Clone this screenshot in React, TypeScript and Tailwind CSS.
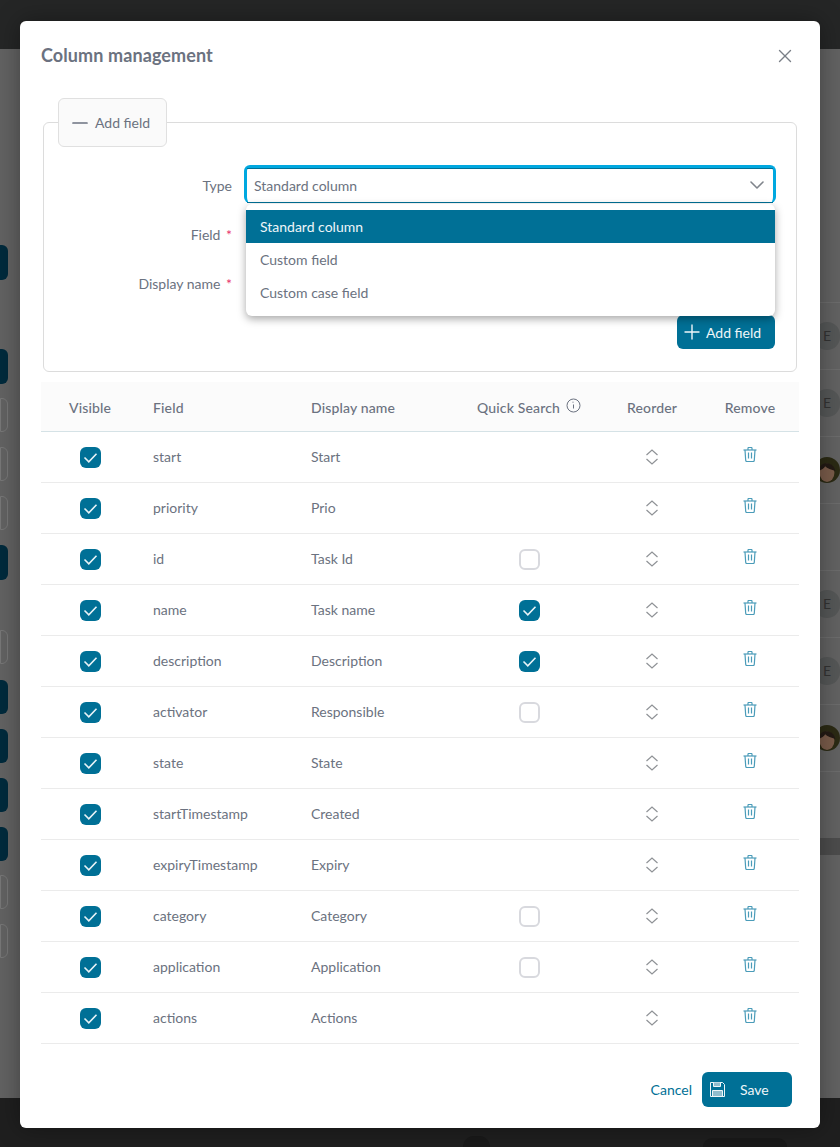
import { Minus, Plus, X, ChevronDown } from "lucide-react";

const rows = [
  { field: "start", name: "Start", quick: null },
  { field: "priority", name: "Prio", quick: null },
  { field: "id", name: "Task Id", quick: false },
  { field: "name", name: "Task name", quick: true },
  { field: "description", name: "Description", quick: true },
  { field: "activator", name: "Responsible", quick: false },
  { field: "state", name: "State", quick: null },
  { field: "startTimestamp", name: "Created", quick: null },
  { field: "expiryTimestamp", name: "Expiry", quick: null },
  { field: "category", name: "Category", quick: false },
  { field: "application", name: "Application", quick: false },
  { field: "actions", name: "Actions", quick: null },
];

const grid = "grid grid-cols-[98px_158px_163px_138px_108px_88px] items-center";

const Checkbox = ({ checked }: { checked: boolean }) =>
  checked ? (
    <div className="w-[21px] h-[21px] rounded-[6px] bg-[#007096] flex items-center justify-center">
      <svg width="21" height="21" viewBox="0 0 21 21" fill="none" stroke="#e8f3f7" strokeWidth="1.6">
        <path d="M4.5 10.5 8.8 14.8 16.5 6.8" />
      </svg>
    </div>
  ) : (
    <div className="w-[21px] h-[21px] rounded-[6px] bg-white border-2 border-[#d8d9de]" />
  );

const Reorder = () => (
  <svg width="14" height="16" viewBox="0 0 14 16" fill="none" stroke="#8f9296" strokeWidth="1.2">
    <path d="M1.5 6 7 1l5.5 5" />
    <path d="M1.5 10 7 15l5.5-5" />
  </svg>
);

const Trash = () => (
  <svg width="14" height="15" viewBox="0 0 14 15" fill="none" stroke="#4b9cb9" strokeWidth="1.2">
    <path d="M.5 3h13" />
    <path d="M5 3V1.2c0-.4.3-.7.7-.7h2.6c.4 0 .7.3.7.7V3" />
    <path d="M2 3l.7 10.2c0 .7.6 1.3 1.3 1.3h6c.7 0 1.3-.6 1.3-1.3L12 3" />
    <path d="M5.5 5.5v6M8.5 5.5v6" />
  </svg>
);

const Info = () => (
  <svg width="15" height="15" viewBox="0 0 15 15" fill="none" stroke="#6b7280" strokeWidth="1">
    <circle cx="7.5" cy="7.5" r="6.5" />
    <path d="M6.5 4.2h1M7.5 6.5v4" />
  </svg>
);

const SaveIcon = () => (
  <svg width="15" height="15" viewBox="0 0 15 15" fill="none" stroke="#eef6f9" strokeWidth="1">
    <path d="M.5.5h12l2 2v12H.5z" />
    <path d="M3.5.5v4h7v-4" fill="#8fbccd" />
    <path d="M2.5 8.5h10v6h-10z" fill="#8fbccd" />
  </svg>
);

const RowAvatar = ({ letter }: { letter?: boolean }) =>
  letter ? (
    <div className="w-7 h-7 rounded-full bg-[#555757] flex items-center justify-center text-[#333] text-sm">E</div>
  ) : (
    <svg width="28" height="28" viewBox="0 0 28 28">
      <circle cx="14" cy="14" r="14" fill="#2b2a14" />
      <ellipse cx="14" cy="17" rx="8" ry="10" fill="#7a5c4a" />
      <path d="M5 15c1-7 6-9 11-8 4 1 6 4 7 8-4-1-9-3-11-5-1 2-4 4-7 5z" fill="#231a14" />
    </svg>
  );

export default function App() {
  return (
    <div className="relative w-[840px] h-[1147px] overflow-hidden font-['Lato',sans-serif] text-[14px] text-[#6b7280]">
      {/* dimmed page behind the dialog */}
      <div className="h-full flex flex-col bg-[#1f2020]">
        <div className="h-[49px] bg-[#252626]" />
        <div className="flex-1 flex justify-between bg-[#626262]">
          <div className="w-2 flex flex-col">
            <div className="mt-[196px] h-[35px] rounded-r-md bg-[#002a3c]" />
            <div className="mt-[69px] h-[35px] rounded-r-md bg-[#002a3c]" />
            <div className="mt-[14px] h-[34px] rounded-r-md border border-[#777]" />
            <div className="mt-[15px] h-[34px] rounded-r-md border border-[#777]" />
            <div className="mt-[15px] h-[34px] rounded-r-md border border-[#777]" />
            <div className="mt-[15px] h-[35px] rounded-r-md bg-[#002a3c]" />
            <div className="mt-[50px] h-[34px] rounded-r-md border border-[#777]" />
            <div className="mt-4 h-[34px] rounded-r-md bg-[#002a3c]" />
            <div className="mt-[15px] h-[34px] rounded-r-md bg-[#002a3c]" />
            <div className="mt-[15px] h-[34px] rounded-r-md bg-[#002a3c]" />
            <div className="mt-[15px] h-[34px] rounded-r-md bg-[#002a3c]" />
            <div className="mt-[14px] h-[34px] rounded-r-md border border-[#777]" />
            <div className="mt-[15px] h-[34px] rounded-r-md border border-[#777]" />
          </div>
          <div className="w-10 flex flex-col pt-[253px]">
            {[true, true, false, null, true, true, false, null].map((a, i) => (
              <div key={i} className="h-[67px] border-t border-[#6c6c6c] flex items-center pl-[14px]">
                {a !== null && <RowAvatar letter={a} />}
              </div>
            ))}
            <div className="h-[17px] bg-[#4c4c4c]" />
          </div>
        </div>
        <div className="h-[49px] flex items-start pl-[463px] bg-[#1f1f1f]">
          <div className="mt-[38px] w-[27px] h-[11px] rounded-t-full bg-[#191919]" />
          <div className="mt-[40px] ml-[213px] w-[84px] h-[9px] rounded-t-xl bg-[#191919]" />
        </div>
      </div>

      {/* dialog */}
      <div className="absolute left-5 top-[21px] w-[800px] h-[1107px] rounded-md bg-white shadow-[0_0_24px_rgba(0,0,0,0.35)] flex flex-col">
        <div className="h-[77px] pl-[21px] pr-[24px] pt-[21px] flex justify-between">
          <h2 className="text-[18px] leading-[26px] font-bold tracking-[0.1px] text-[#6b7280]">Column management</h2>
          <X className="mt-[3px] w-[22px] h-[22px] text-[#7a7f87]" strokeWidth={1.5} />
        </div>

        <div className="relative mx-[23px] mt-[24px] h-[250px] rounded-md border border-[#dcdcdc]">
          <div className="ml-[14px] -mt-[25px] w-[109px] h-[49px] rounded-md border border-[#e0e0e0] bg-[#fafafa] flex items-center pl-[9px] gap-[3px]">
            <Minus className="w-6 h-6 text-[#6b7280]" strokeWidth={1.7} />
            <span>Add field</span>
          </div>

          <div className="mt-[14px] flex flex-col">
            <div className="h-[49px] flex items-center">
              <label className="w-[188px] text-right">Type</label>
              <div className="ml-[12px] mb-[3px] w-[532px] h-[38px] rounded-md border-[3px] border-b-0 border-[#00a8e0]">
                <div className="h-[35px] border-y border-[#007096] flex items-center justify-between pl-[7px] pr-[4px]">
                  <span>Standard column</span>
                  <ChevronDown className="w-6 h-6 -mt-[2px] text-[#80858c]" strokeWidth={1.6} />
                </div>
              </div>
            </div>
            {["Field", "Display name"].map((l) => (
              <div key={l} className="h-[49px] flex items-center">
                <label className="w-[188px] text-right">
                  {l} <span className="ml-[2px] text-[#e8336d]">*</span>
                </label>
                <input className="ml-[14px] w-[529px] h-[36px] rounded-md border border-[#dcdcdc]" />
              </div>
            ))}
            <div className="flex justify-end pr-[21px] mt-[7px]">
              <div className="w-[98px] h-[34px] rounded-md bg-[#007096] text-[#eef6f9] flex items-center pl-[3px] gap-[2px]">
                <Plus className="w-6 h-6" strokeWidth={1.4} />
                <span>Add field</span>
              </div>
            </div>
          </div>

          {/* open select list */}
          <div className="absolute left-[202px] top-[81px] w-[529px] h-[112px] py-[6px] rounded-md bg-white shadow-[0_3px_8px_rgba(0,0,0,0.35)]">
            <div className="h-[33px] pl-[14px] flex items-center bg-[#007096] text-[#eef6f9]">Standard column</div>
            <div className="h-[33px] pl-[14px] flex items-center">Custom field</div>
            <div className="h-[33px] pl-[14px] flex items-center">Custom case field</div>
          </div>
        </div>

        <div className="mx-[21px] mt-[10px] w-[758px]">
          <div className={`${grid} h-[50px] pt-[2px] bg-[#fbfbfb] border-b border-[#d5e2e6] font-medium tracking-[0.15px]`}>
            <div className="text-center">Visible</div>
            <div className="pl-[14px]">Field</div>
            <div className="pl-[14px]">Display name</div>
            <div className="flex justify-center items-center gap-[6px]">
              <span>Quick Search</span>
              <span className="-mt-[4px]">
                <Info />
              </span>
            </div>
            <div className="text-center">Reorder</div>
            <div className="text-center">Remove</div>
          </div>
          {rows.map((r) => (
            <div key={r.field} className={`${grid} h-[51px] border-b border-[#ebebeb]`}>
              <div className="flex justify-center">
                <Checkbox checked />
              </div>
              <div className="pl-[14px] pb-[2px]">{r.field}</div>
              <div className="pl-[14px] pb-[2px]">{r.name}</div>
              <div className="flex justify-center">{r.quick !== null && <Checkbox checked={r.quick} />}</div>
              <div className="flex justify-center">
                <Reorder />
              </div>
              <div className="flex justify-center pb-[5px]">
                <Trash />
              </div>
            </div>
          ))}
        </div>

        <div className="mt-[28px] pr-[28px] flex justify-end items-center gap-[10px]">
          <span className="text-[#007096]">Cancel</span>
          <div className="w-[90px] h-[35px] rounded-md bg-[#007096] text-[#eef6f9] flex items-center pl-[8px]">
            <SaveIcon />
            <span className="ml-[15px]">Save</span>
          </div>
        </div>
      </div>
    </div>
  );
}
